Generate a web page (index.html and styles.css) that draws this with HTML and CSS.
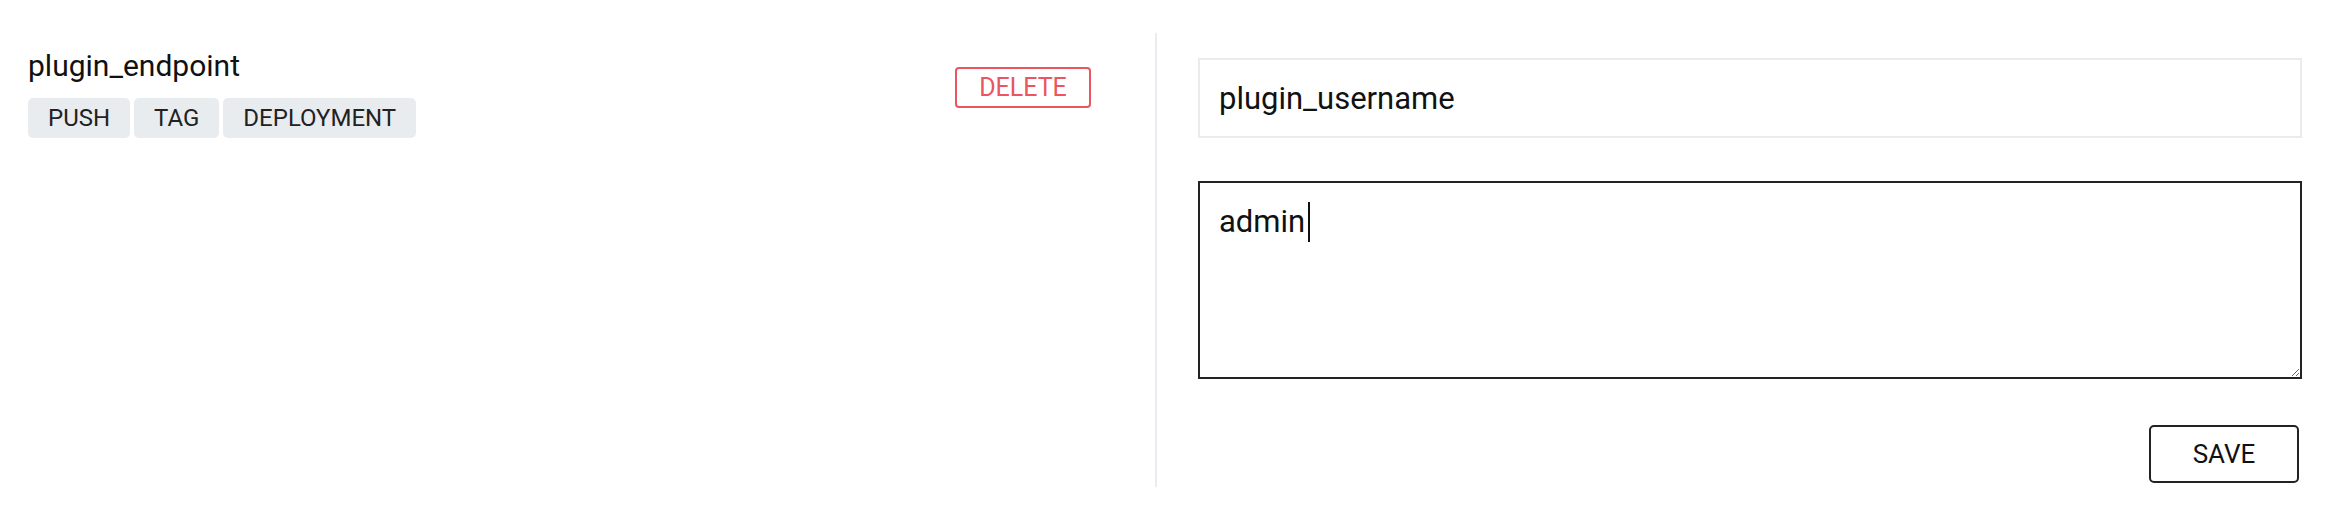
FILE: index.html
```html
<!DOCTYPE html>
<html lang="en">
<head>
<meta charset="utf-8">
<title>Plugin settings</title>
<link rel="stylesheet" href="styles.css">
</head>
<body>
  <div class="page">
    <div class="row">
      <div class="left">
        <div class="info">
          <div class="name">plugin_endpoint</div>
          <div class="tags">
            <span class="tag">PUSH</span>
            <span class="tag">TAG</span>
            <span class="tag">DEPLOYMENT</span>
          </div>
        </div>
        <button class="btn btn-delete" type="button">DELETE</button>
      </div>
      <div class="divider"></div>
      <div class="right">
        <div class="field">plugin_username</div>
        <div class="area" role="textbox">admin<span class="caret"></span></div>
        <div class="actions">
          <button class="btn btn-save" type="button">SAVE</button>
        </div>
      </div>
    </div>
  </div>
</body>
</html>
```

FILE: styles.css
```css
html, body {
  margin: 0;
  padding: 0;
  background: #ffffff;
}

body {
  font-family: Roboto, "Liberation Sans", Arial, sans-serif;
  color: #111111;
}

.page {
  padding: 33px 28px 0 28px;
}

.row {
  display: flex;
  height: 454px;
}

.left {
  width: 1063px;
  flex: none;
  display: flex;
  justify-content: space-between;
  align-items: flex-start;
  padding-top: 15px;
  box-sizing: border-box;
}

.name {
  font-size: 30px;
  line-height: 36px;
  color: #111;
}

.tags {
  display: flex;
  gap: 4px;
  margin-top: 14px;
}

.tag {
  display: inline-flex;
  align-items: center;
  height: 40px;
  padding: 0 20px;
  background: #e9ecef;
  border-radius: 5px;
  font-size: 24px;
  color: #222;
}

.btn {
  font-family: Roboto, "Liberation Sans", Arial, sans-serif;
  background: #fff;
  cursor: pointer;
  box-sizing: border-box;
  padding: 0;
}

.btn-delete {
  margin-top: 19px;
  width: 136px;
  height: 41px;
  border: 2px solid #ea5560;
  border-radius: 4px;
  color: #ea5560;
  font-size: 25px;
}

.divider {
  flex: none;
  width: 2px;
  margin-left: 64px;
  background: #e8ecf1;
}

.right {
  flex: 1;
  margin-left: 41px;
  padding-top: 25px;
  display: flex;
  flex-direction: column;
}

.field {
  height: 80px;
  box-sizing: border-box;
  border: 2px solid #e9ecef;
  display: flex;
  align-items: center;
  padding: 0 19px;
  font-size: 31px;
  color: #111;
}

.area {
  margin-top: 43px;
  height: 198px;
  box-sizing: border-box;
  border: 2px solid #222;
  padding: 19px 19px;
  font-size: 31px;
  line-height: 40px;
  color: #111;
  overflow: auto;
  resize: vertical;
}

.caret {
  display: inline-block;
  width: 2px;
  height: 40px;
  background: #111;
  vertical-align: top;
  margin-left: 3px;
}

.actions {
  display: flex;
  justify-content: flex-end;
  margin-top: 46px;
  padding-right: 3px;
}

.btn-save {
  width: 150px;
  height: 58px;
  border: 2px solid #222;
  border-radius: 5px;
  color: #111;
  font-size: 26px;
}
```
